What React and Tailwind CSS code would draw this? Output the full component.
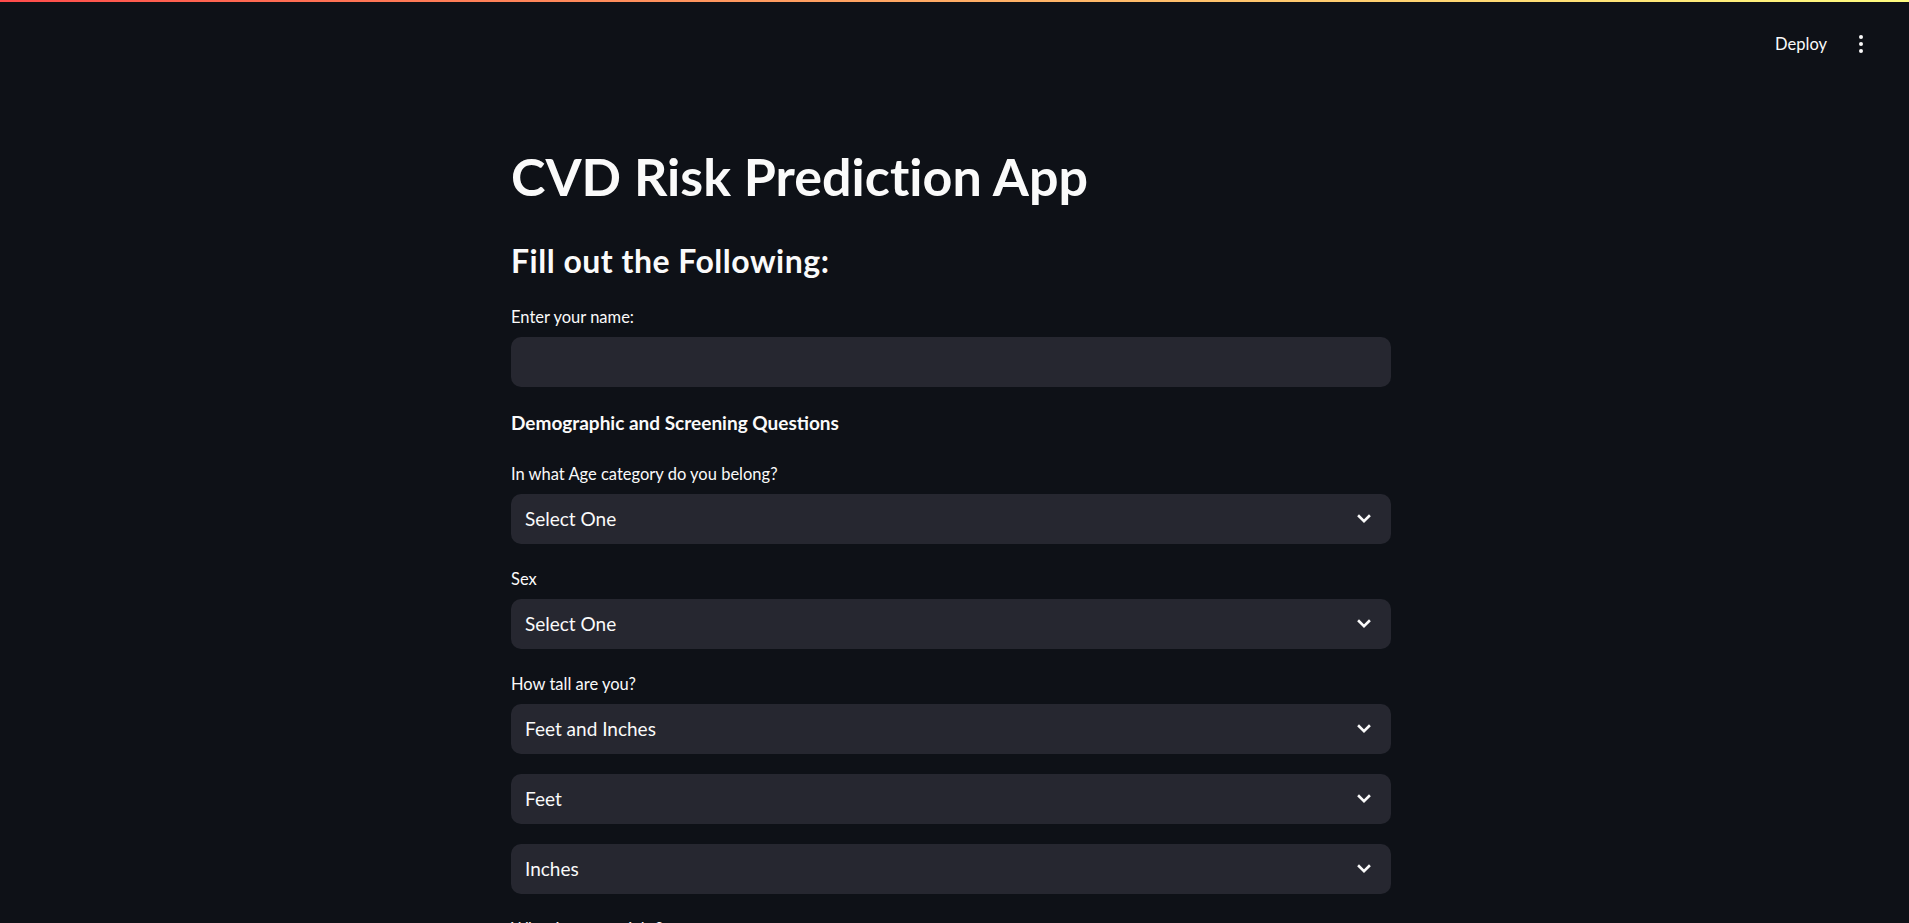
import React from "react";

function Chevron() {
  return (
    <svg width="14" height="10" viewBox="0 0 14 10" className="shrink-0">
      <path d="M2 2.2 L7 7.2 L12 2.2" fill="none" stroke="#fafafa" strokeWidth="2.6" strokeLinecap="square" strokeLinejoin="miter" />
    </svg>
  );
}

function Label({ children }) {
  return (
    <div className="h-[30px] mb-[5px] flex items-center text-[16.5px] text-[#fafafa] leading-none">
      {children}
    </div>
  );
}

function Select({ label, value }) {
  return (
    <div className="flex flex-col">
      {label ? <Label>{label}</Label> : null}
      <div className="h-[50px] rounded-[10px] bg-[#262730] flex items-center justify-between pl-[14px] pr-[20px]">
        <span className="text-[19px] text-[#fafafa]">{value}</span>
        <Chevron />
      </div>
    </div>
  );
}

export default function App() {
  return (
    <div
      className="h-screen bg-[#0e1117] text-[#fafafa] overflow-hidden"
      style={{ fontFamily: "Lato, 'Open Sans', sans-serif" }}
    >
      <div className="h-[2px] bg-gradient-to-r from-[#ff4b4b] to-[#fffd80]" />
      <header className="h-[84px] flex items-center justify-end pr-[44px]">
        <span className="text-[16.5px] text-[#fafafa] mr-[30px]">Deploy</span>
        <div className="flex flex-col items-center gap-[3px] w-[8px]">
          <span className="block w-[4px] h-[4px] rounded-full bg-[#fafafa]" />
          <span className="block w-[4px] h-[4px] rounded-full bg-[#fafafa]" />
          <span className="block w-[4px] h-[4px] rounded-full bg-[#fafafa]" />
        </div>
      </header>
      <main className="flex justify-center pr-[7px] pt-[59px]">
        <div className="w-[880px] flex flex-col">
          <h1 className="text-[52px] leading-[62px] font-bold tracking-[0.05px]">CVD Risk Prediction App</h1>
          <h3 className="mt-[35px] text-[32px] leading-[38px] font-bold tracking-[0.5px]">Fill out the Following:</h3>
          <div className="mt-[22px] flex flex-col gap-5">
            <div className="flex flex-col">
              <Label>Enter your name:</Label>
              <div className="h-[50px] rounded-[10px] bg-[#262730]" />
            </div>
            <div className="h-[32px] flex items-center text-[19px] font-bold">
              Demographic and Screening Questions
            </div>
            <Select label="In what Age category do you belong?" value="Select One" />
            <Select label="Sex" value="Select One" />
            <Select label="How tall are you?" value="Feet and Inches" />
            <Select value="Feet" />
            <Select value="Inches" />
            <Select label="What is your weight?" value="Pounds" />
          </div>
        </div>
      </main>
    </div>
  );
}
